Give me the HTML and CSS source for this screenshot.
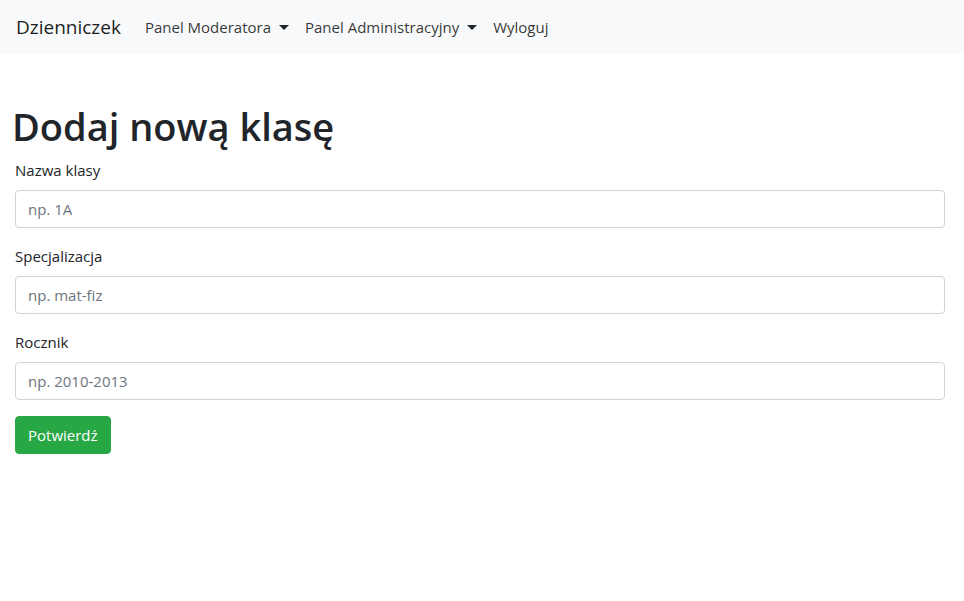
FILE: index.html
```html
<!DOCTYPE html>
<html lang="pl">
<head>
<meta charset="utf-8">
<title>Dzienniczek</title>
<link rel="stylesheet" href="styles.css">
</head>
<body>
<nav class="navbar">
  <a class="brand" href="#">Dzienniczek</a>
  <ul class="nav">
    <li><a href="#" class="nav-link dropdown">Panel Moderatora<span class="caret"></span></a></li>
    <li><a href="#" class="nav-link dropdown">Panel Administracyjny<span class="caret"></span></a></li>
    <li><a href="#" class="nav-link">Wyloguj</a></li>
  </ul>
</nav>
<main class="container">
  <h1 class="title">Dodaj nową klasę</h1>
  <form class="form">
    <div class="form-group">
      <label class="label" for="nazwa">Nazwa klasy</label>
      <input class="input" id="nazwa" type="text" placeholder="np. 1A">
    </div>
    <div class="form-group">
      <label class="label" for="spec">Specjalizacja</label>
      <input class="input" id="spec" type="text" placeholder="np. mat-fiz">
    </div>
    <div class="form-group">
      <label class="label" for="rocznik">Rocznik</label>
      <input class="input" id="rocznik" type="text" placeholder="np. 2010-2013">
    </div>
    <button type="submit" class="btn">Potwierdź</button>
  </form>
</main>
</body>
</html>
```

FILE: styles.css
```css
* { box-sizing: border-box; }
html, body { margin: 0; padding: 0; }
body {
  font-family: "Open Sans", "Noto Sans", sans-serif;
  font-size: 15px;
  line-height: 24px;
  color: #212529;
  background: #fff;
}
.navbar {
  height: 54px;
  background: #f8f9fa;
  display: flex;
  align-items: center;
  padding: 0 16px;
}
.brand {
  font-size: 19px;
  color: rgba(0,0,0,0.9);
  text-decoration: none;
  margin-right: 16px;
  line-height: 30px;
}
.nav {
  list-style: none;
  display: flex;
  margin: 0;
  padding: 0;
}
.nav-link {
  display: flex;
  align-items: center;
  padding: 8px 8px;
  color: rgba(0,0,0,0.8);
  text-decoration: none;
  font-size: 15px;
}
.caret {
  display: inline-block;
  margin-left: 8px;
  width: 0;
  height: 0;
  border-top: 5px solid #212529;
  border-left: 5px solid transparent;
  border-right: 5px solid transparent;
}
.container {
  padding: 48px 19px 0 15px;
}
.title {
  font-size: 38px;
  line-height: 48px;
  font-weight: 600;
  margin: 0 0 8px -3px;
}
.form-group { margin-bottom: 16px; }
.label {
  display: block;
  margin-bottom: 8px;
  line-height: 24px;
}
.input {
  display: block;
  width: 100%;
  height: 38px;
  padding: 6px 12px;
  font: inherit;
  color: #495057;
  border: 1px solid #ced4da;
  border-radius: 4px;
  background: #fff;
}
.input::placeholder { color: #6c757d; }
.btn {
  height: 38px;
  padding: 6px 12px;
  font: inherit;
  color: #fff;
  background: #28a745;
  border: 1px solid #28a745;
  border-radius: 4px;
}
```
